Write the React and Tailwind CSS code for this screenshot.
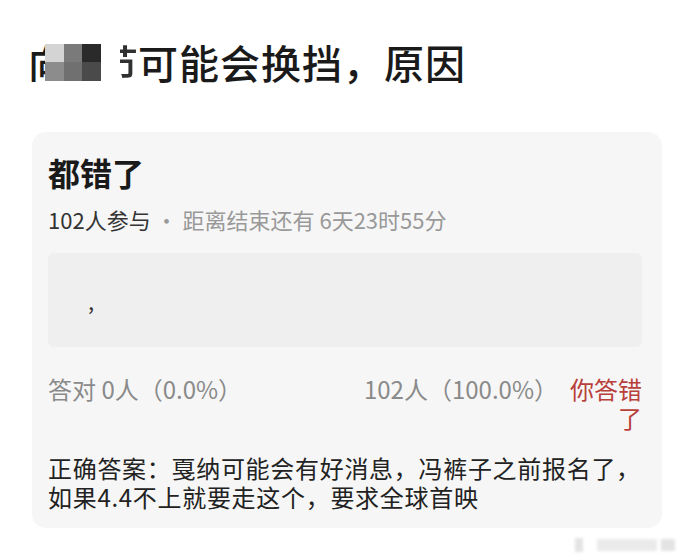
export default function App() {
  return (
    <div
      className="min-h-screen w-[690px] bg-white text-[#222]"
      style={{ fontFamily: '"Noto Sans CJK SC", "Noto Sans", sans-serif' }}
    >
      <h1 className="flex items-center pl-[28px] pt-[42px] text-[40px] font-medium leading-[40px] text-[#1a1a1a]">
        <span className="inline-block w-[17px] overflow-hidden">向</span>
        <span className="grid h-[37px] w-[56px] grid-cols-3 grid-rows-2 blur-[0.6px]">
          <span className="bg-[#d4d4d4]" />
          <span className="bg-[#7a7a7a]" />
          <span className="bg-[#2a2a2a]" />
          <span className="bg-[#8c8c8c]" />
          <span className="bg-[#707070]" />
          <span className="bg-[#4a4a4a]" />
        </span>
        <span className="ml-[19px] flex w-[18px] justify-end overflow-hidden opacity-90">
          <span className="shrink-0">节</span>
        </span>
        <span className="tracking-[1px]">可能会换挡，原因</span>
      </h1>

      <div className="mx-[32px] mt-[50px] h-[396px] w-[630px] rounded-[14px] bg-[#f6f6f6] pl-[16px] pr-[16px] pt-[24px]">
        <div className="text-[32px] font-bold leading-[32px] text-[#1a1a1a]">都错了</div>
        <div className="mt-[19px] text-[22px] leading-[24px]">
          <span className="text-[#333]">102人参与</span>
          <span className="text-[#999]"> · 距离结束还有 6天23时55分</span>
        </div>

        <div className="mr-[4px] mt-[22px] flex h-[94px] items-center rounded-[6px] bg-[#efefef] pl-[40px] text-[22px] text-[#333]">
          ,
        </div>

        <div className="mr-[4px] mt-[27px] flex items-start justify-between text-[24px] leading-[29px] text-[#8a8a8a]">
          <span>答对 0人（0.0%）</span>
          <div className="flex items-start gap-[10px]">
            <span>102人（100.0%）</span>
            <span className="w-[74px] text-right text-[#b8403a]">你答错了</span>
          </div>
        </div>

        <p className="mt-[21px] text-[24px] leading-[29px] tracking-[0.7px] text-[#222]">
          正确答案：戛纳可能会有好消息，冯裤子之前报名了，如果4.4不上就要走这个，要求全球首映
        </p>
      </div>

      <div className="ml-[575px] mt-[10px] flex items-center gap-[4px] opacity-40 blur-[1.5px]">
        <span className="h-[14px] w-[8px] bg-[#bbb]" />
        <span className="ml-[10px] h-[12px] w-[60px] bg-[#ccc]" />
        <span className="h-[12px] w-[14px] bg-[#bbb]" />
      </div>
    </div>
  );
}
